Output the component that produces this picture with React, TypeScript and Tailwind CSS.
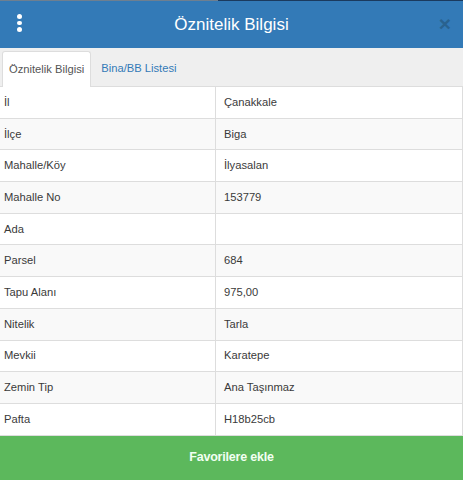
const rows: [string, string][] = [
  ["İl", "Çanakkale"],
  ["İlçe", "Biga"],
  ["Mahalle/Köy", "İlyasalan"],
  ["Mahalle No", "153779"],
  ["Ada", ""],
  ["Parsel", "684"],
  ["Tapu Alanı", "975,00"],
  ["Nitelik", "Tarla"],
  ["Mevkii", "Karatepe"],
  ["Zemin Tip", "Ana Taşınmaz"],
  ["Pafta", "H18b25cb"],
];

export default function App() {
  return (
    <div
      className="flex h-[480px] w-[463px] flex-col overflow-hidden bg-white text-[#3a3a3a]"
      style={{ fontFamily: '"Liberation Sans", Arial, sans-serif' }}
    >
      {/* Header */}
      <div className="relative flex h-[48px] shrink-0 items-center justify-center bg-[#337ab7]">
        <div className="absolute left-0 right-0 top-0 flex h-[1px]">
          <div className="w-[218px] bg-[#6e7f90]" />
          <div className="flex-1 bg-[#1b3a5e]" />
        </div>
        <div className="absolute left-[17px] top-[14px] flex flex-col gap-[2px]">
          <span className="h-[4.5px] w-[4.5px] rounded-full bg-white" />
          <span className="h-[4.5px] w-[4.5px] rounded-full bg-white" />
          <span className="h-[4.5px] w-[4.5px] rounded-full bg-white" />
        </div>
        <h1 className="text-[17px] leading-none text-white">Öznitelik Bilgisi</h1>
        <span className="absolute right-[12px] top-[13px] text-[21px] font-bold leading-none text-[#29628f]">
          ×
        </span>
      </div>

      {/* Tabs */}
      <div className="flex h-[39px] shrink-0 items-end border-b border-[#ddd] bg-[#efefef] pl-[2px]">
        <div className="-mb-px flex h-[36px] items-center rounded-t-[3px] border border-b-0 border-[#ddd] bg-white px-[6px] text-[11.2px] text-[#555]">
          Öznitelik Bilgisi
        </div>
        <div className="flex h-[35px] items-center px-[10px] text-[11.2px] text-[#337ab7]">
          Bina/BB Listesi
        </div>
      </div>

      {/* Table */}
      <div className="shrink-0 border-r border-[#ddd]">
        {rows.map(([label, value], i) => (
          <div
            key={label}
            className={`flex h-[31.7px] border-b border-[#ddd] text-[11.2px] ${
              i % 2 === 1 ? "bg-[#f9f9f9]" : "bg-white"
            }`}
          >
            <div className="flex w-[216px] items-center border-r border-[#ddd] pl-[4px]">{label}</div>
            <div className="flex flex-1 items-center pl-[8px]">{value}</div>
          </div>
        ))}
      </div>

      {/* Footer button */}
      <button className="flex flex-1 items-center justify-center bg-[#5cb85c] text-[12.5px] font-bold tracking-[-0.2px] text-[#f2fff2]">
        Favorilere ekle
      </button>
    </div>
  );
}
